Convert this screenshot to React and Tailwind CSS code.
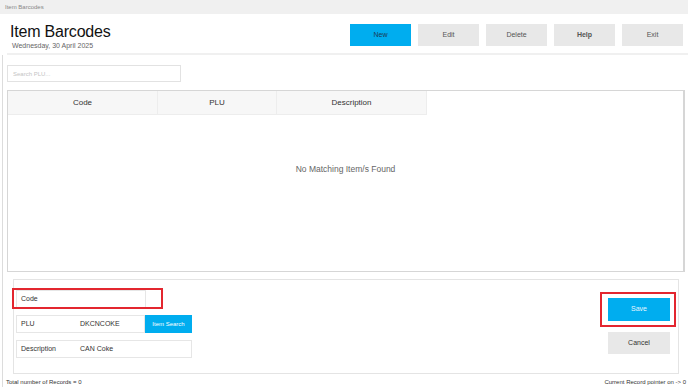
import React from "react";

const HeaderButton = ({ label, primary, bold }) => (
  <button
    className={`w-[61px] h-[22px] text-[7px] ${
      primary ? "bg-[#00adef] text-[#1d3a55]" : "bg-[#e8e8e8] text-[#555]"
    } ${bold ? "font-bold text-[#333]" : ""}`}
  >
    {label}
  </button>
);

const Field = ({ label, value, width }) => (
  <div className={`flex items-center h-[18px] ${width} border border-[#e6e6e6] bg-white text-[7px] text-[#333]`}>
    <span className="w-[63px] pl-[4px]">{label}</span>
    <span>{value}</span>
  </div>
);

const App = () => {
  return (
    <div className="w-[688px] h-[387px] overflow-hidden bg-white font-['Liberation_Sans',Arial,sans-serif]">
      <div className="h-[14px] bg-[#f0f0f0] pl-[5px] text-[6px] leading-[14px] text-[#888]">
        Item Barcodes
      </div>

      <div className="flex justify-between h-[39px]">
        <div className="pl-[10px] pt-[9px]">
          <div className="text-[16px] leading-[18px] tracking-[-0.2px] text-[#111]">Item Barcodes</div>
          <div className="pl-[2px] text-[7px] leading-[10px] text-[#666]">Wednesday, 30 April 2025</div>
        </div>
        <div className="flex gap-[7px] pt-[10px] pr-[5px]">
          <HeaderButton label="New" primary />
          <HeaderButton label="Edit" />
          <HeaderButton label="Delete" />
          <HeaderButton label="Help" bold />
          <HeaderButton label="Exit" />
        </div>
      </div>
      <div className="ml-[7px] h-[2px] bg-[#f0f0f0]" />

      <div className="ml-[2px] border-l border-[#dcdcdc] h-[332px] flex flex-col">
        <div className="pl-[4px] pt-[10px]">
          <input
            className="block w-[174px] h-[17px] border border-[#e2e2e2] px-[5px] text-[6px] outline-none placeholder:text-[#c4c4c4]"
            placeholder="Search PLU..."
          />
        </div>

        <div className="ml-[4px] mt-[8px] w-[678px] h-[182px] border border-[#d6d6d6] border-r-2">
          <div className="flex">
            <div className="flex h-[24px] bg-[#f7f7f7] border-b border-r border-[#ededed] text-[8px] text-[#333]">
              <div className="w-[150px] flex items-center justify-center border-r border-[#ededed]">Code</div>
              <div className="w-[119px] flex items-center justify-center border-r border-[#ededed]">PLU</div>
              <div className="w-[149px] flex items-center justify-center">Description</div>
            </div>
          </div>
          <div className="pt-[48px] text-center text-[8.5px] text-[#666]">No Matching Item/s Found</div>
        </div>

        <div className="relative ml-[10px] mt-[7px] w-[666px] h-[95px] border border-[#e4e4e4] flex justify-between">
          <div className="flex flex-col gap-[7px] pl-[2px] pt-[10px]">
            <Field label="Code" value="" width="w-[130px]" />
            <div className="flex">
              <Field label="PLU" value="DKCNCOKE" width="w-[129px]" />
              <button className="w-[47px] h-[18px] bg-[#00adef] text-white text-[6px]">Item Search</button>
            </div>
            <Field label="Description" value="CAN Coke" width="w-[176px]" />
          </div>
          <div className="flex flex-col gap-[11px] pt-[18px] pr-[8px]">
            <button className="w-[62px] h-[23px] bg-[#00adef] text-[#e8f6ff] text-[7px]">Save</button>
            <button className="w-[62px] h-[22px] bg-[#e8e8e8] text-[#333] text-[7px]">Cancel</button>
          </div>
          <div className="absolute left-[-2px] top-[8px] w-[151px] h-[21px] border-2 border-[#e3262f]" />
          <div className="absolute left-[586px] top-[12px] w-[76px] h-[35px] border-2 border-[#e3262f]" />
        </div>

        <div className="flex justify-between mt-auto pl-[3px] pr-[2px] text-[6px] leading-[9px] text-[#333]">
          <span>Total number of Records = 0</span>
          <span>Current Record pointer on -&gt; 0</span>
        </div>
      </div>
    </div>
  );
};

export default App;
